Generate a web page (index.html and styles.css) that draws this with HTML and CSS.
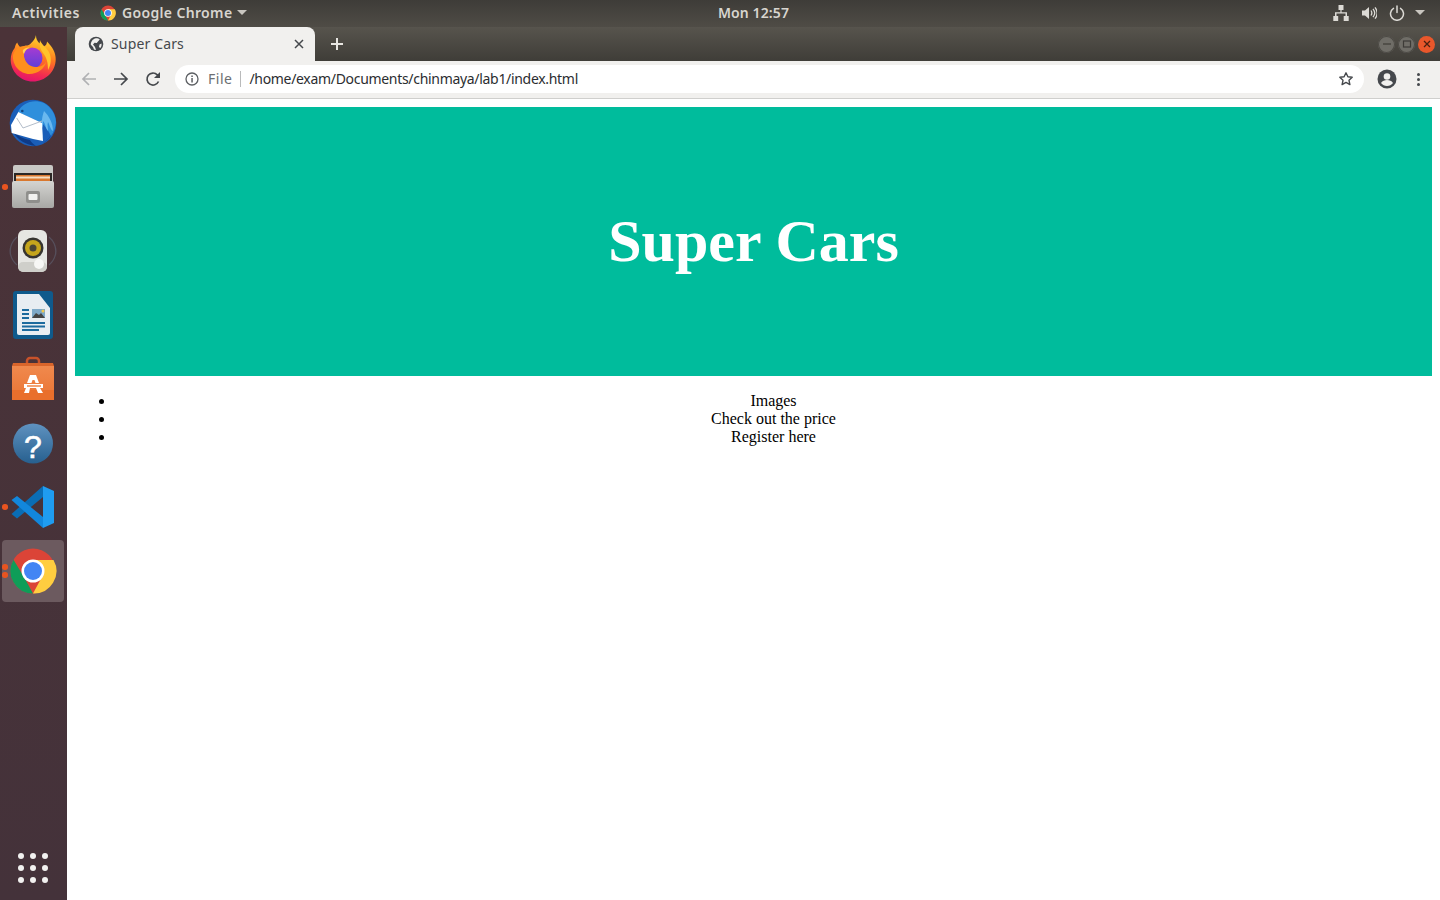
FILE: index.html
```html
<!DOCTYPE html>
<html lang="en">
<head>
<meta charset="utf-8">
<title>Super Cars</title>
<link rel="stylesheet" href="styles.css">
</head>
<body>
<div class="topbar">
  <div class="tb-left">
    <span class="tb-text activities">Activities</span>
    <span class="tb-app">
      <svg class="tb-chrome" viewBox="0 0 48 48"><use href="#chrome"/></svg>
      <span class="tb-text app-name">Google Chrome</span>
      <span class="caret"></span>
    </span>
  </div>
  <div class="tb-clock tb-text">Mon 12:57</div>
  <div class="tb-right">
    <svg class="tray" viewBox="0 0 16 16" width="16" height="16"><path fill="#dcdad5" d="M5.500 0h5v5H8.600v2.200H14V11h1.700v5h-5v-5h1.800V8.500h-9V11h1.700v5H.3v-5H2V7.200h5.400V5H5.500z"/></svg>
    <svg class="tray" viewBox="0 0 16 16" width="16" height="16"><path fill="#dcdad5" d="M1 5.500h3L8 2v12l-4-3.500H1z"/><path fill="none" stroke="#dcdad5" stroke-width="1.300" d="M10 5.500c1 1.500 1 3.500 0 5M12 3.800c2 2.500 2 6 0 8.400M14 2.300c2.700 3.500 2.700 8 0 11.400"/></svg>
    <svg class="tray" viewBox="0 0 16 16" width="16" height="16"><path fill="none" stroke="#dcdad5" stroke-width="1.500" stroke-linecap="round" d="M8 1v6.500M4.500 3.300a6.500 6.500 0 1 0 7 0"/></svg>
    <span class="caret tray-caret"></span>
  </div>
</div>

<div class="desktop">
  <nav class="dock">
    <div class="dock-item">
      <svg viewBox="0 0 48 48" width="48" height="48">
        <defs>
          <linearGradient id="fx" x1="0.65" y1="0" x2="0.4" y2="1"><stop offset="0" stop-color="#ffdf2e"/><stop offset=".45" stop-color="#ff7a1f"/><stop offset=".8" stop-color="#f22c50"/><stop offset="1" stop-color="#e3126f"/></linearGradient>
          <linearGradient id="fxb" x1="0.5" y1="0" x2="0.5" y2="1"><stop offset="0" stop-color="#a73bd2"/><stop offset="1" stop-color="#5b3fd8"/></linearGradient>
        </defs>
        <path fill="url(#fx)" d="M27 .5c0 6 4 8 8 11 2-1 3-3 3-5 5 5 9 11 8.700 18C46.500 37 36 46.500 24 46.500 11 46.500 1.700 36 1.700 25c0-5 1.500-9 4-12 .5-2 1-4 2.500-5.500 1 2.500 2 4 4 5 2-1.500 4-2 6-2 1-.2 3-.8 4-2.500 2-2 4-4 4.800-8z"/>
        <path fill="#ffc42b" d="M31 5c1 4 6 7 9 12 3 6 2 13-1 18 0-7-1-12-5-17-3-4-4-8-3-13z"/>
        <circle cx="23" cy="23" r="10.500" fill="url(#fxb)"/>
        <path fill="#ff8f1c" d="M4 20c2-6 6-9 12-9 3 0 5 1 7 2-4 0-8 2-8 6 0 2 0 3 .5 4 1 5 6 9 11 9 5 0 9-2 11-6-2 8-9 13-17 13C11 39 3 30 4 20z"/>
        <path fill="#ffd05a" d="M14 15c2-2 4-2.500 7-2.500-3 1-5 3-6 6.500-1-1-1.500-3-1-4z"/>
      </svg>
    </div>
    <div class="dock-item">
      <svg viewBox="0 0 48 48" width="48" height="48">
        <circle cx="24" cy="24" r="23.300" fill="#1a5eb8"/>
        <path fill="#2f8fdc" d="M9 13C13 4 24-.5 35 4c7 4 11.500 11 12 19-.5 5-2 10-5 14-3-6-6-10-9-13z"/>
        <path fill="#6ab8ef" d="M35 12c5 5 9 12 9 20-3-2-3-6-5-9-1 3 0 6 0 9-3-3-2-7-5-10 0 3 0 5 0 7-2-5-1-11 1-17z"/>
        <path fill="#0e3a86" d="M4 33c5 8 13 13 23 14-3-2-5-4-6-6-6-1-12-4-17-8zM34 44c4-2 7-6 9-10-2 4-4 8-9 10z"/>
        <path fill="#fff" d="M9.300 13L33 24l1 18-10-2-21.300-6L2 26z"/>
        <path fill="none" stroke="#b3bdca" stroke-width="1" d="M7.700 19L14 29l19-7"/>
        <path fill="#14447e" d="M12 12a1.300 1.300 0 1 0 2.600 0 1.300 1.300 0 1 0-2.600 0z"/>
      </svg>
    </div>
    <div class="dock-item running">
      <span class="pip"></span>
      <svg viewBox="0 0 48 48" width="48" height="48">
        <defs><linearGradient id="cab" x1="0" y1="0" x2="0" y2="1"><stop offset="0" stop-color="#d4d4d1"/><stop offset="1" stop-color="#a8a8a5"/></linearGradient></defs>
        <rect x="4" y="2" width="40" height="20" rx="2" fill="#c9c9c6"/>
        <rect x="5" y="10" width="38" height="9" fill="#2b2725"/>
        <rect x="7" y="12" width="34" height="6" fill="#d9782f"/>
        <rect x="7" y="13.500" width="34" height="2" fill="#f4dcc0"/>
        <rect x="3" y="18" width="42" height="27" rx="2" fill="url(#cab)"/>
        <rect x="17" y="28" width="14" height="12" rx="2" fill="#8f8f8c"/>
        <rect x="19.500" y="31" width="9" height="6" rx="1" fill="#f2f2f0"/>
      </svg>
    </div>
    <div class="dock-item">
      <svg viewBox="0 0 48 48" width="48" height="48">
        <path fill="none" stroke="#6c7a92" stroke-opacity=".4" stroke-width="1.200" d="M8 10C-1 18-1 30 8 38M5 13c-5 7-5 15 0 22M40 10c9 8 9 20 0 28M43 13c5 7 5 15 0 22"/>
        <rect x="9" y="3" width="29" height="42" rx="6" fill="#e6e6e2"/>
        <rect x="9" y="35" width="29" height="10" rx="5" fill="#cfcfca"/>
        <circle cx="24" cy="21" r="10.500" fill="#37342f"/>
        <circle cx="24" cy="21" r="8" fill="#c5a51c"/>
        <circle cx="24" cy="21" r="3.500" fill="#4a4535"/>
        <circle cx="30" cy="37" r="5" fill="#f7f7f5"/>
      </svg>
    </div>
    <div class="dock-item">
      <svg viewBox="0 0 48 48" width="48" height="48">
        <rect x="4" y="0" width="40" height="48" rx="3" fill="#0f5a8c"/>
        <path fill="#e8edf2" d="M8 3h22l11 14v25a2 2 0 0 1-2 2H10a2 2 0 0 1-2-2z"/>
        <rect x="13" y="18" width="7" height="2" fill="#1c6a9e"/>
        <rect x="13" y="22" width="7" height="2" fill="#1c6a9e"/>
        <rect x="13" y="26" width="7" height="2" fill="#1c6a9e"/>
        <rect x="23" y="18" width="13" height="9" fill="#7ea9c8"/>
        <path fill="#444" d="M23 27l4-5 3 2 2-2 4 5z"/>
        <circle cx="34" cy="20" r="1.500" fill="#f2c94c"/>
        <rect x="13" y="31" width="23" height="2" fill="#1c6a9e"/>
        <rect x="13" y="34.500" width="23" height="2" fill="#1c6a9e"/>
        <rect x="13" y="38" width="17" height="2" fill="#1c6a9e"/>
      </svg>
    </div>
    <div class="dock-item">
      <svg viewBox="0 0 48 48" width="48" height="48">
        <defs><linearGradient id="bag" x1="0" y1="0" x2="0" y2="1"><stop offset="0" stop-color="#f0894d"/><stop offset="1" stop-color="#ea7434"/></linearGradient></defs>
        <path fill="none" stroke="#c8522a" stroke-width="2.500" d="M18 14V6a3 3 0 0 1 3-3h6a3 3 0 0 1 3 3v8"/>
        <path fill="#d9652b" d="M4 8h40l1 3H3z"/>
        <path fill="url(#bag)" d="M3 11h42v34H3z"/>
        <rect x="3" y="35" width="42" height="10" fill="#e96f2c"/>
        <path fill="#fff" d="M21 20h6l3 8h-3.500l-1-3h-2l-1 3H18z"/>
        <path fill="#fff" d="M15 29h19v4H15z"/>
        <rect x="18" y="30.300" width="14" height="1.400" fill="#ee7d3b"/>
        <path fill="#fff" d="M17 33h4l-1 5h-5zM27 33h4l3 5h-5z"/>
      </svg>
    </div>
    <div class="dock-item">
      <svg viewBox="0 0 48 48" width="48" height="48">
        <defs><linearGradient id="hp" x1="0" y1="0" x2="0" y2="1"><stop offset="0" stop-color="#5f92c0"/><stop offset="1" stop-color="#27608f"/></linearGradient></defs>
        <circle cx="24" cy="24.500" r="20" fill="url(#hp)"/>
        <text class="help-mark" x="24" y="39" text-anchor="middle">?</text>
      </svg>
    </div>
    <div class="dock-item running">
      <span class="pip"></span>
      <svg viewBox="0 0 48 48" width="48" height="48">
        <path fill="#0a6db5" d="M34 3v11L8 35.500 2.500 31z"/>
        <path fill="#1287dc" d="M34 45V34L8 13l-5.500 4z"/>
        <path fill="#1f9cf0" d="M34 3l11 5v32l-11 5z"/>
      </svg>
    </div>
    <div class="dock-item running active">
      <span class="pip pip-a"></span>
      <span class="pip pip-b"></span>
      <svg viewBox="0 0 48 48" width="48" height="48">
        <defs>
          <g id="chrome">
            <circle cx="24" cy="24" r="22.500" fill="#db4437"/>
            <path fill="#0f9d58" d="M4.500 12.700L15 30l9 16.500A22.500 22.500 0 0 1 4.500 12.700z"/>
            <path fill="#ffcd40" d="M24 13h20.500A22.500 22.500 0 0 1 24 46.500L34 28z"/>
            <circle cx="24" cy="24" r="11.500" fill="#fff"/>
            <circle cx="24" cy="24" r="9" fill="#4285f4"/>
          </g>
        </defs>
        <use href="#chrome"/>
      </svg>
    </div>
    <div class="dock-spacer"></div>
    <div class="app-grid">
      <i></i><i></i><i></i><i></i><i></i><i></i><i></i><i></i><i></i>
    </div>
  </nav>

  <main class="window">
    <div class="tabstrip">
      <div class="tab">
        <svg class="favicon" viewBox="0 0 16 16" width="16" height="16">
          <circle cx="8" cy="8" r="7.300" fill="#45484c"/>
          <path fill="#f1f0ee" d="M8 2.200c1.500 0 3 .4 3.800 1.200L10 5.500 8.800 7 6.500 6.700 5 8.500l2 2.500 1 3c-1 0-1.600-.2-2-.4L5 11 2.800 8.800C2.700 6 4.500 2.800 8 2.200zM11.500 8.500l2-1c.3 2-.3 3.500-1.300 4.500l-1.200-1z"/>
        </svg>
        <span class="tab-title">Super Cars</span>
        <svg class="tab-close" viewBox="0 0 10 10" width="10" height="10"><path stroke="#45484c" stroke-width="1.500" d="M1 1l8 8M9 1l-8 8"/></svg>
      </div>
      <svg class="newtab" viewBox="0 0 14 14" width="14" height="14"><path stroke="#e8e6e2" stroke-width="2" d="M7 1v12M1 7h12"/></svg>
      <div class="win-controls">
        <span class="wc"><svg viewBox="0 0 12 12" width="12" height="12"><path stroke="#3d3b37" stroke-width="1.200" d="M2 6h8"/></svg></span>
        <span class="wc"><svg viewBox="0 0 12 12" width="12" height="12"><rect x="2.500" y="3" width="7" height="6" fill="none" stroke="#3d3b37" stroke-width="1.200"/></svg></span>
        <span class="wc wc-close"><svg viewBox="0 0 12 12" width="12" height="12"><path stroke="#4a2010" stroke-width="1.300" d="M3 3l6 6M9 3l-6 6"/></svg></span>
      </div>
    </div>
    <div class="toolbar">
      <svg class="nav-btn" viewBox="0 0 16 16" width="16" height="16"><path fill="none" stroke="#b0b1b3" stroke-width="1.700" d="M15 8H2M8 2L2 8l6 6"/></svg>
      <svg class="nav-btn" viewBox="0 0 16 16" width="16" height="16"><path fill="none" stroke="#45484c" stroke-width="1.700" d="M1 8h13M8 2l6 6-6 6"/></svg>
      <svg class="nav-btn" viewBox="0 0 16 16" width="16" height="16"><path fill="none" stroke="#45484c" stroke-width="1.700" d="M13.500 10.500A6 6 0 1 1 12.300 3.800L14 6"/><path fill="#45484c" d="M15 1v6H9z"/></svg>
      <div class="omnibox">
        <svg class="info" viewBox="0 0 14 14" width="14" height="14"><circle cx="7" cy="7" r="6" fill="none" stroke="#5c5f63" stroke-width="1.300"/><rect x="6.300" y="6" width="1.500" height="4.500" fill="#5c5f63"/><rect x="6.300" y="3.500" width="1.500" height="1.500" fill="#5c5f63"/></svg>
        <span class="scheme">File</span>
        <span class="sep"></span>
        <span class="url">/home/exam/Documents/chinmaya/lab1/index.html</span>
        <svg class="star" viewBox="0 0 16 16" width="16" height="16"><path fill="none" stroke="#45484c" stroke-width="1.400" stroke-linejoin="round" d="M8 1.800l1.900 4 4.300.5-3.200 3 .9 4.300L8 11.400l-3.900 2.200.9-4.300-3.200-3 4.300-.5z"/></svg>
      </div>
      <svg class="avatar" viewBox="0 0 20 20" width="20" height="20"><circle cx="10" cy="10" r="9.500" fill="#45484c"/><circle cx="10" cy="7.500" r="3.300" fill="#f1f0ee"/><path fill="#f1f0ee" d="M4 14c1.500-2.300 3.500-3 6-3s4.500.7 6 3c-1.500 2-3.600 3-6 3s-4.500-1-6-3z"/></svg>
      <span class="menu-dots"><i></i><i></i><i></i></span>
    </div>
    <div class="page">
      <header class="hero"><h1>Super Cars</h1></header>
      <ul class="links">
        <li>Images</li>
        <li>Check out the price</li>
        <li>Register here</li>
      </ul>
    </div>
  </main>
</div>
</body>
</html>
```
FILE: styles.css
```css
* { box-sizing: border-box; }
html, body { margin: 0; height: 100%; overflow: hidden; }
body { display: flex; flex-direction: column; width: 1440px; height: 900px; background: #fff; }

.topbar {
  height: 27px; flex: none; display: grid; grid-template-columns: 706px auto 1fr; align-items: center;
  background: linear-gradient(#3e3c38, #4f4c46); padding: 0 15px 2px 12px;
}
.tb-text { font: 600 14px/1 "Noto Sans", sans-serif; color: #d8d5cf; letter-spacing: .1px; white-space: nowrap; }
.activities { letter-spacing: .55px; }
.app-name { letter-spacing: .35px; }
.tb-left { display: flex; align-items: center; gap: 20px; }
.tb-app { display: flex; align-items: center; }
.tb-chrome { width: 16px; height: 16px; margin-right: 6px; }
.tb-app .caret { margin-left: 5px; }
.caret { width: 0; height: 0; border-left: 5px solid transparent; border-right: 5px solid transparent; border-top: 5px solid #c9c6c0; display: inline-block; }
.tb-right { display: flex; align-items: center; justify-content: flex-end; gap: 12px; }
.tray { display: block; }
.tray-caret { margin-left: -2px; }

.desktop { flex: 1; display: flex; min-height: 0; }

.dock { width: 67px; flex: none; background: linear-gradient(#4b3338, #44323a); display: flex; flex-direction: column; align-items: center; padding: 1px 3px 0 2px; }
.dock-item { width: 62px; height: 62px; flex: none; margin-bottom: 2px; display: flex; align-items: center; justify-content: center; position: relative; border-radius: 4px; }
.dock-item.active { background: #6c5a5f; }
.pip { position: absolute; left: 0; top: 28px; width: 5.500px; height: 5.500px; border-radius: 50%; background: #e95420; }
.pip-a { top: 24px; }
.pip-b { top: 32px; }
.dock-spacer { flex: 1; }
.help-mark { font: 400 32px "Liberation Sans", sans-serif; fill: #fff; stroke: #fff; stroke-width: .6px; }
.app-grid { display: grid; grid-template-columns: repeat(3, 6px); gap: 6px; margin-bottom: 17px; }
.app-grid i { width: 6px; height: 6px; border-radius: 50%; background: #f2f1f0; }

.window { flex: 1; min-width: 0; display: flex; flex-direction: column; }
.tabstrip { height: 34px; flex: none; display: flex; align-items: flex-end; background: linear-gradient(#57544d, #3f3d38); padding-left: 8px; }
.tab { width: 240px; height: 34px; background: #f1f0ee; border-radius: 8px 8px 0 0; display: flex; align-items: center; padding: 0 11px 0 13px; }
.favicon { margin-right: 7px; }
.tab-title { font: 400 14px/1 "Noto Sans", sans-serif; color: #45484c; letter-spacing: .15px; flex: 1; }
.newtab { align-self: center; margin-left: 15px; }
.win-controls { margin-left: auto; align-self: center; display: flex; gap: 3px; padding-right: 5px; }
.wc { width: 17px; height: 17px; border-radius: 50%; background: #6f6d67; display: flex; align-items: center; justify-content: center; box-shadow: inset 0 0 0 1px #4c4a45; }
.wc-close { background: #e9572b; box-shadow: none; }

.toolbar { height: 38px; flex: none; background: #f1f0ee; border-bottom: 1px solid #cfcfcd; display: flex; align-items: center; padding: 0 20px 1px 14px; }
.nav-btn { margin-right: 16px; flex: none; }
.omnibox { flex: 1; height: 28px; margin-left: -2px; margin-right: 1px; background: #fff; border-radius: 14px; display: flex; align-items: center; padding: 0 10px; min-width: 0; }
.info { margin-right: 9px; flex: none; }
.scheme { font: 400 14px/1 "Noto Sans", sans-serif; color: #6c6f73; letter-spacing: .5px; }
.sep { width: 1px; height: 16px; background: #b9babb; margin: 0 8px 0 8px; }
.url { font: 400 14px/1 "Noto Sans", sans-serif; color: #2b2d30; flex: 1; letter-spacing: -.31px; }
.star { flex: none; }
.avatar { margin-left: 12px; flex: none; }
.menu-dots { display: flex; flex-direction: column; gap: 2px; margin-left: 20px; width: 3px; }
.menu-dots i { width: 3px; height: 3px; border-radius: 50%; background: #45484c; }

.page { flex: 1; padding: 8px; background: #fff; min-height: 0; font: 16px/18px "Liberation Serif", serif; color: #000; }
.hero { height: 269px; background: #00bc9c; display: flex; align-items: center; justify-content: center; }
.hero h1 { margin: 0; font: 700 60px/1.15 "Liberation Serif", serif; color: #fff; }
.links { margin: 16px 0; padding-left: 40px; text-align: center; }
```
